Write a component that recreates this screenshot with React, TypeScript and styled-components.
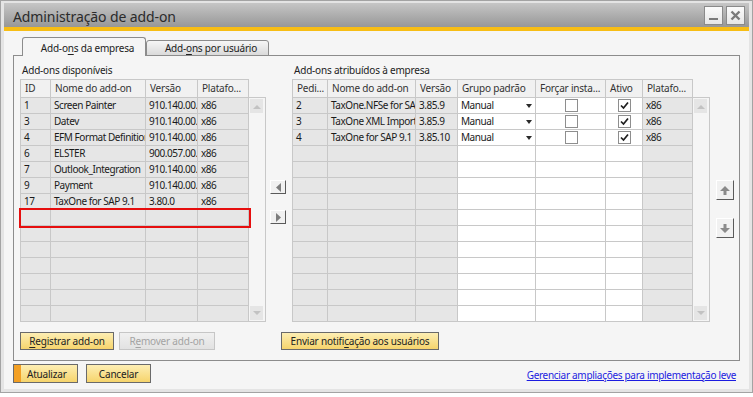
import React from "react";
import styled, { createGlobalStyle, css } from "styled-components";

const LINE = "#c8c8c8";
const FRAME = "#8c8c8c";

const GlobalStyle = createGlobalStyle`
  html, body {
    margin: 0;
    padding: 0;
    background: #ffffff;
  }
  body {
    font-family: "Noto Sans", "Open Sans", sans-serif;
    font-size: 10px;
    letter-spacing: -0.2px;
    color: #222;
  }
  * {
    box-sizing: border-box;
  }
`;

const Window = styled.div`
  width: 753px;
  height: 393px;
  border: 1px solid #a3a3a3;
  background: #e4e4e4;
  padding: 2px 3px 3px;
  display: flex;
  flex-direction: column;
`;

const TitleBar = styled.div`
  height: 28px;
  flex: none;
  display: flex;
  align-items: flex-start;
  padding: 0 4px 0 9px;
  background: linear-gradient(#c6c6c6, #979797);
  border-bottom: 4px solid #f7bd14;
`;

const Title = styled.div`
  font-size: 14px;
  line-height: 20px;
  margin-top: 4px;
  letter-spacing: -0.1px;
  color: #2b2b2b;
`;

const Controls = styled.div`
  margin-left: auto;
  align-self: center;
  display: flex;
  gap: 3px;
`;

const ControlButton = styled.div`
  width: 19px;
  height: 19px;
  border: 1px solid #8a8a8a;
  background: linear-gradient(#fbfbfb, #e6e6e6);
  display: flex;
  align-items: center;
  justify-content: center;
`;

const Body = styled.div`
  flex: 1;
  background: #f5f5f5;
  padding: 6px 9px 0;
  display: flex;
  flex-direction: column;
`;

const TabStrip = styled.div`
  height: 19px;
  display: flex;
  align-items: flex-end;
  padding-left: 9px;
  margin-bottom: -1px;
  position: relative;
  z-index: 1;
`;

const Tab = styled.div<{ $active?: boolean }>`
  display: flex;
  align-items: flex-end;
  justify-content: center;
  padding-left: 7px;
  line-height: 13px;
  color: #222;
  border: 1px solid ${FRAME};
  border-radius: 3px 3px 0 0;
  ${({ $active }) =>
    $active
      ? css`
          width: 124px;
          height: 19px;
          border-bottom: none;
          padding-bottom: 1px;
          background: #f5f5f5;
        `
      : css`
          width: 123px;
          height: 16px;
          background: linear-gradient(#f6f6f6, #dadada);
        `}
`;

const Panel = styled.div`
  height: 306px;
  flex: none;
  border: 1px solid ${FRAME};
  padding: 8px 4px 0 6px;
  display: flex;
  flex-direction: column;
`;

const Columns = styled.div`
  display: flex;
  align-items: flex-start;
`;

const Group = styled.div<{ $w: number }>`
  width: ${({ $w }) => $w}px;
  flex: none;
  display: flex;
  flex-direction: column;
`;

const GroupLabel = styled.div`
  height: 13px;
  line-height: 13px;
  margin-bottom: 2px;
  padding-left: 2px;
  color: #222;
`;

const TableWrap = styled.div`
  display: flex;
  align-items: stretch;
`;

const Grid = styled.div`
  flex: none;
  border-top: 1px solid ${LINE};
  border-left: 1px solid ${LINE};
`;

const HeadRow = styled.div`
  display: flex;
  height: 18px;
  border-bottom: 1px solid ${LINE};
  background: #f1f1f1;
`;

const HeadCell = styled.div<{ $w: number }>`
  width: ${({ $w }) => $w}px;
  flex: none;
  border-right: 1px solid ${LINE};
  padding-left: 4px;
  line-height: 17px;
  color: #333;
  white-space: nowrap;
  overflow: hidden;
`;

const Row = styled.div<{ $marked?: boolean }>`
  display: flex;
  height: 16px;
  border-bottom: 1px solid ${LINE};
  ${({ $marked }) =>
    $marked &&
    css`
      position: relative;
      z-index: 1;
      outline: 2px solid #e60e0e;
    `}
`;

const Cell = styled.div<{ $w: number; $white?: boolean; $center?: boolean }>`
  width: ${({ $w }) => $w}px;
  flex: none;
  border-right: 1px solid ${LINE};
  background: ${({ $white }) => ($white ? "#ffffff" : "#e6e6e6")};
  padding: 0 1px 0 3px;
  line-height: 15px;
  letter-spacing: -0.45px;
  white-space: nowrap;
  overflow: hidden;
  color: #1a1a1a;
  display: flex;
  align-items: center;
  justify-content: ${({ $center }) => ($center ? "center" : "flex-start")};
`;

const SelectText = styled.span`
  flex: 1;
`;

const Caret = styled.span`
  width: 0;
  height: 0;
  border-left: 3.5px solid transparent;
  border-right: 3.5px solid transparent;
  border-top: 4px solid #2a2a2a;
  margin-right: 2px;
`;

const Check = styled.span`
  width: 13px;
  height: 13px;
  border: 1px solid #8e8e8e;
  background: #fff;
  display: flex;
  align-items: center;
  justify-content: center;
  margin-left: -1px;
`;

const VScroll = styled.div`
  width: 17px;
  flex: none;
  margin-top: 18px;
  border: 1px solid ${LINE};
  border-left: none;
  background: #f5f5f5;
  padding: 1px 2px 1px 1px;
  display: flex;
  flex-direction: column;
  justify-content: space-between;
`;

const ScrollButton = styled.div`
  height: 14px;
  background: #e5e5e5;
  display: flex;
  align-items: center;
  justify-content: center;
`;

const SideColumn = styled.div<{ $w: number; $gap: number }>`
  width: ${({ $w }) => $w}px;
  flex: none;
  padding-top: 116px;
  display: flex;
  flex-direction: column;
  gap: ${({ $gap }) => $gap}px;
`;

const BevelButton = styled.div<{ $h: number }>`
  height: ${({ $h }) => $h}px;
  background: #f1f1f1;
  border: 1px solid;
  border-color: #ffffff #5a5a5a #5a5a5a #ffffff;
  display: flex;
  align-items: center;
  justify-content: center;
`;

const PanelButtons = styled.div`
  display: flex;
  align-items: center;
  margin-top: 10px;
`;

const Button = styled.div<{ $w: number; $disabled?: boolean; $default?: boolean }>`
  width: ${({ $w }) => $w}px;
  height: 18px;
  flex: none;
  display: flex;
  align-items: center;
  justify-content: center;
  line-height: 14px;
  border: 1px solid #6a6a6a;
  background: linear-gradient(#fdeeb3, #f6d46c);
  color: #222;
  ${({ $disabled }) =>
    $disabled &&
    css`
      border-color: #c6c6c6;
      background: linear-gradient(#f0f0f0, #e2e2e2);
      color: #a3a3a3;
    `}
  ${({ $default }) =>
    $default &&
    css`
      height: 19px;
      justify-content: flex-start;
      padding-left: 13px;
      box-shadow: inset 7px 0 0 #f3a024;
    `}
`;

const Mnemonic = styled.u`
  text-decoration: underline;
  text-underline-offset: 2px;
`;

const Footer = styled.div`
  display: flex;
  align-items: center;
  margin-top: 3px;
  gap: 8px;
`;

const Link = styled.a`
  margin-left: auto;
  margin-right: 4px;
  padding-top: 3px;
  letter-spacing: -0.3px;
  color: #1c1ce0;
  text-decoration: underline;
  cursor: pointer;
`;

const leftCols = [
  { label: "ID", w: 30 },
  { label: "Nome do add-on", w: 95 },
  { label: "Versão", w: 52 },
  { label: "Platafo...", w: 51 },
];

const leftRows = [
  ["1", "Screen Painter", "910.140.00.", "x86"],
  ["3", "Datev", "910.140.00.", "x86"],
  ["4", "EFM Format Definition", "910.140.00.", "x86"],
  ["6", "ELSTER", "900.057.00.", "x86"],
  ["7", "Outlook_Integration", "910.140.00.", "x86"],
  ["9", "Payment", "910.140.00.", "x86"],
  ["17", "TaxOne for SAP 9.1", "3.80.0", "x86"],
];

const rightCols = [
  { label: "Pedi...", w: 35 },
  { label: "Nome do add-on", w: 88 },
  { label: "Versão", w: 42 },
  { label: "Grupo padrão", w: 78 },
  { label: "Forçar insta...", w: 70 },
  { label: "Ativo", w: 37 },
  { label: "Platafo...", w: 50 },
];

const rightRows = [
  ["2", "TaxOne.NFSe for SAP 9.1", "3.85.9"],
  ["3", "TaxOne XML Importer", "3.85.9"],
  ["4", "TaxOne for SAP 9.1", "3.85.10"],
];

const ROWS = 14;

const Tri = ({ dir, color = "#c2c2c2" }: { dir: "up" | "down"; color?: string }) => (
  <svg width="8" height="5" viewBox="0 0 8 5">
    <path d={dir === "up" ? "M0 5 L4 1 L8 5 Z" : "M0 0 L8 0 L4 4 Z"} fill={color} />
  </svg>
);

const Scrollbar = () => (
  <VScroll>
    <ScrollButton>
      <Tri dir="up" />
    </ScrollButton>
    <ScrollButton>
      <Tri dir="down" />
    </ScrollButton>
  </VScroll>
);

const Checkbox = ({ checked }: { checked?: boolean }) => (
  <Check>
    {checked && (
      <svg width="9" height="9" viewBox="0 0 9 9">
        <path d="M1 4.5 L3.5 7 L8 1.5" stroke="#1e1e1e" strokeWidth="1.7" fill="none" />
      </svg>
    )}
  </Check>
);

const LeftTable = () => (
  <TableWrap>
    <Grid>
      <HeadRow>
        {leftCols.map((c) => (
          <HeadCell key={c.label} $w={c.w}>
            {c.label}
          </HeadCell>
        ))}
      </HeadRow>
      {Array.from({ length: ROWS }).map((_, i) => {
        const data = leftRows[i];
        return (
          <Row key={i} $marked={i === 7}>
            {leftCols.map((c, j) => (
              <Cell key={j} $w={c.w}>
                {data ? data[j] : ""}
              </Cell>
            ))}
          </Row>
        );
      })}
    </Grid>
    <Scrollbar />
  </TableWrap>
);

const RightTable = () => (
  <TableWrap>
    <Grid>
      <HeadRow>
        {rightCols.map((c) => (
          <HeadCell key={c.label} $w={c.w}>
            {c.label}
          </HeadCell>
        ))}
      </HeadRow>
      {Array.from({ length: ROWS }).map((_, i) => {
        const data = rightRows[i];
        const w = rightCols.map((c) => c.w);
        return (
          <Row key={i}>
            <Cell $w={w[0]}>{data ? data[0] : ""}</Cell>
            <Cell $w={w[1]}>{data ? data[1] : ""}</Cell>
            <Cell $w={w[2]}>{data ? data[2] : ""}</Cell>
            <Cell $w={w[3]} $white>
              {data && (
                <>
                  <SelectText>Manual</SelectText>
                  <Caret />
                </>
              )}
            </Cell>
            <Cell $w={w[4]} $white $center>
              {data && <Checkbox />}
            </Cell>
            <Cell $w={w[5]} $white $center>
              {data && <Checkbox checked />}
            </Cell>
            <Cell $w={w[6]}>{data ? "x86" : ""}</Cell>
          </Row>
        );
      })}
    </Grid>
    <Scrollbar />
  </TableWrap>
);

const SideArrow = ({ dir }: { dir: "left" | "right" }) => (
  <svg width="5" height="9" viewBox="0 0 5 9">
    <path d={dir === "left" ? "M5 0 L0 4.5 L5 9 Z" : "M0 0 L5 4.5 L0 9 Z"} fill="#7e7e7e" />
  </svg>
);

const OrderArrow = ({ dir }: { dir: "up" | "down" }) => (
  <svg width="10" height="9" viewBox="0 0 10 9">
    <path
      d={dir === "up" ? "M5 0 L10 5 L6.5 5 L6.5 9 L3.5 9 L3.5 5 L0 5 Z" : "M3.5 0 L6.5 0 L6.5 4 L10 4 L5 9 L0 4 L3.5 4 Z"}
      fill="#8a8a8a"
    />
  </svg>
);

const App: React.FC = () => {
  return (
    <>
      <GlobalStyle />
      <Window>
        <TitleBar>
          <Title>Administração de add-on</Title>
          <Controls>
            <ControlButton>
              <svg width="11" height="11" viewBox="0 0 11 11">
                <rect x="1" y="8" width="9" height="2" fill="#7a7a7a" />
              </svg>
            </ControlButton>
            <ControlButton>
              <svg width="11" height="11" viewBox="0 0 11 11">
                <path d="M1.5 1.5 L9.5 9.5 M9.5 1.5 L1.5 9.5" stroke="#7a7a7a" strokeWidth="2.4" />
              </svg>
            </ControlButton>
          </Controls>
        </TitleBar>
        <Body>
          <TabStrip>
            <Tab $active>
              <span>
                Add-o<Mnemonic>n</Mnemonic>s da empresa
              </span>
            </Tab>
            <Tab>
              <span>
                Add-<Mnemonic>o</Mnemonic>ns por usuário
              </span>
            </Tab>
          </TabStrip>
          <Panel>
            <Columns>
              <Group $w={246}>
                <GroupLabel>Add-ons disponíveis</GroupLabel>
                <LeftTable />
              </Group>
              <SideColumn $w={16} $gap={16} style={{ marginLeft: 4 }}>
                <BevelButton $h={14}>
                  <SideArrow dir="left" />
                </BevelButton>
                <BevelButton $h={14}>
                  <SideArrow dir="right" />
                </BevelButton>
              </SideColumn>
              <Group $w={418} style={{ marginLeft: 6 }}>
                <GroupLabel>Add-ons atribuídos à empresa</GroupLabel>
                <RightTable />
              </Group>
              <SideColumn $w={18} $gap={18} style={{ marginLeft: 6 }}>
                <BevelButton $h={20}>
                  <OrderArrow dir="up" />
                </BevelButton>
                <BevelButton $h={20}>
                  <OrderArrow dir="down" />
                </BevelButton>
              </SideColumn>
            </Columns>
            <PanelButtons>
              <Button $w={94}>
                <span>
                  <Mnemonic>R</Mnemonic>egistrar add-on
                </span>
              </Button>
              <Button $w={96} $disabled style={{ marginLeft: 5 }}>
                <span>
                  R<Mnemonic>e</Mnemonic>mover add-on
                </span>
              </Button>
              <Button $w={158} style={{ marginLeft: 66 }}>
                <span>
                  Enviar notifi<Mnemonic>c</Mnemonic>ação aos usuários
                </span>
              </Button>
            </PanelButtons>
          </Panel>
          <Footer>
            <Button $w={65} $default>
              Atualizar
            </Button>
            <Button $w={65} style={{ height: 19 }}>
              Cancelar
            </Button>
            <Link>Gerenciar ampliações para implementação leve</Link>
          </Footer>
        </Body>
      </Window>
    </>
  );
};

export default App;
